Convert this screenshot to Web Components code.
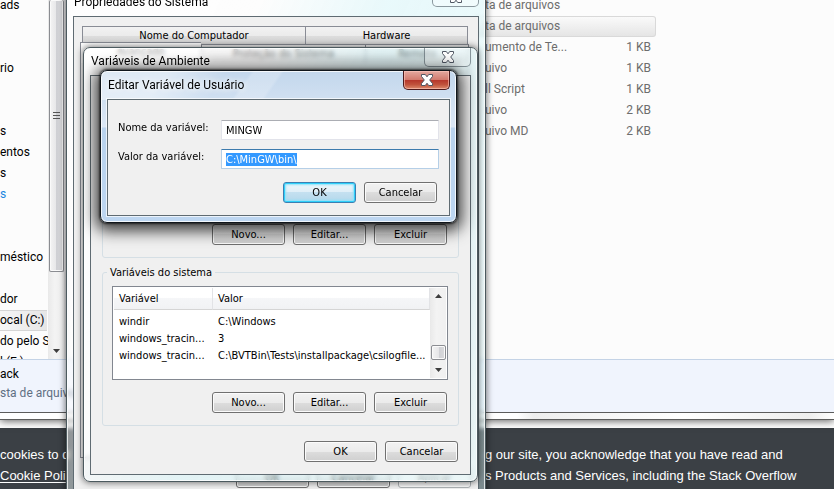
<!DOCTYPE html>
<html lang="pt-BR">
<head>
<meta charset="utf-8">
<title>Variáveis de Ambiente</title>
<style>
  html, body { margin: 0; height: 100%; }
  body { font: 12px/21px Roboto, "Noto Sans", sans-serif; color: #000; overflow: hidden; }
</style>
</head>
<body>
<desk-top></desk-top>
<script>
class Base extends HTMLElement {
  connectedCallback() {
    if (this.shadowRoot) return;
    this.attachShadow({ mode: 'open' }).innerHTML = this.view();
    this.ready();
  }
  ready() {}
}
const TAHOMA = '11px/13px "DejaVu Sans Condensed", "DejaVu Sans", sans-serif';

class PushButton extends Base {
  view() {
    return `<style>
      :host { display: block; width: 73px; }
      button { display: block; box-sizing: border-box; width: 100%; height: 21px; padding: 0; color: #000;
        font: ${TAHOMA}; border: 1px solid #707070; border-radius: 3px; box-shadow: inset 0 0 0 1px #fbfbfb;
        background: linear-gradient(#f2f2f2, #ebebeb 50%, #dddddd 50%, #cfcfcf); }
      :host([default]) button { border-color: #3c7fb1; box-shadow: inset 0 0 0 1px #2fd0fa, inset 0 0 2px 2px #8fe2fa;
        background: linear-gradient(#eef6fa, #dfeef7 50%, #c4e0f0 50%, #b4d8ec); }
      :host([faded]) button { color: #838383; border-color: #adb2b5; background: #f4f4f4; }
    </style><button type="button"><slot></slot></button>`;
  }
}
customElements.define('push-button', PushButton);

class AeroWindow extends Base {
  view() {
    return `<style>
      :host { display: flex; flex-direction: column; box-sizing: border-box; position: absolute;
        border: 1px solid #4c5a5f; border-radius: 7px; padding: 0 6px 6px; overflow: visible;
        backdrop-filter: blur(2px);
        background: linear-gradient(115deg, rgba(255,255,255,.7), rgba(255,255,255,.45) 30%, rgba(213,246,250,.5) 50%, rgba(222,250,252,.4));
        box-shadow: inset 0 0 0 1px rgba(255,255,255,.75), 0 0 6px 1px rgba(0,0,0,.5); }
      :host([active]) { border-color: #10161c;
        background:
          linear-gradient(125deg, rgba(255,255,255,.45) 0 18%, rgba(255,255,255,0) 34% 40%, rgba(255,255,255,.2) 41% 48%, rgba(255,255,255,0) 49%) top / 100% 29px no-repeat,
          linear-gradient(#c3d7ec, #dce8f6 56px, #b9d3ee 57px, #bdd6f1);
        box-shadow: inset 0 0 0 1px rgba(255,255,255,.8), 0 0 2px 1px rgba(0,0,0,.6), 0 3px 15px 5px rgba(0,0,0,.75); }
      header { display: flex; justify-content: space-between; height: 28px; }
      :host([short]) header { height: 27px; }
      :host([tall]) header { height: 29px; }
      h2 { margin: 0; padding: 4px 1px 0; font: 12px/20px Roboto, "Noto Sans", sans-serif;
        text-shadow: 0 0 8px #fff, 0 0 6px #fff; white-space: nowrap; }
      :host([short]) h2 { padding-top: 3px; }
      :host([tall]) h2 { padding: 5px 1px 0; }
      .close { box-sizing: border-box; width: 47px; height: 19px; padding: 0; border: 1px solid rgba(70,85,95,.6); border-top: 0;
        border-radius: 0 0 5px 5px; background: rgba(255,255,255,.3); display: grid; place-items: center; }
      :host([tall]) .close { height: 20px; }
      :host([active]) .close { border-color: #4c1a1c; box-shadow: inset 0 0 0 1px rgba(255,200,190,.6);
        background: linear-gradient(#e3a9a0, #d27b6f 48%, #b5352a 50%, #c0523c 75%, #dc8a6c); }
      .client { display: block; border: 1px solid #5f6b72; background: #f0f0f0; }
      :host([active]) .client { box-shadow: 0 0 0 1px rgba(255,255,255,.7); }
    </style>
    <header><h2>${this.getAttribute('caption')}</h2>
      <button class="close" type="button" aria-label="Fechar">
        <svg width="14" height="12" viewBox="0 0 14 12"><path d="M1.5 .5h3.8L7 2.8 8.700 .5h3.800v2L9.700 6l2.800 3.500v2H8.700L7 9.200 5.300 11.500H1.500v-2L4.300 6 1.500 2.500z" fill="#fff" stroke="#505763" stroke-linejoin="round"/></svg>
      </button></header>
    <div class="client"><slot></slot></div>`;
  }
}
customElements.define('aero-window', AeroWindow);

class ScrollBar extends Base {
  view() {
    return `<style>
      :host { display: flex; flex-direction: column; align-items: center; box-sizing: border-box; width: 16px;
        background: linear-gradient(90deg, #e9e9e9, #f3f3f3 40%, #f0f0f0); }
      svg { flex: none; margin: 6px 0; }
      .space { flex: 1; }
      .thumb { box-sizing: border-box; width: 15px; height: 15px; border: 1px solid #8b8d92; border-radius: 2px;
        box-shadow: inset 0 0 0 1px #fafafa; background: linear-gradient(90deg, #f4f4f4, #e6e6e8 50%, #cfd0d4 50%, #dadadc);
        display: grid; place-items: center; }
      :host(:not([long])) .thumb { margin-bottom: 2px; }
      :host([long]) .up, :host([long]) .space.first, .grip { display: none; }
      :host([long]) .thumb { height: 272px; border-top: 0; padding-bottom: 40px; }
      :host([long]) .grip { display: block; margin: 0; }
    </style>
    <svg class="up" width="7" height="4"><path d="M0 4 L3.5 0 L7 4z" fill="#3d3d3d"/></svg>
    <span class="space first"></span>
    <span class="thumb"><svg class="grip" width="7" height="8"><path d="M0 .5h7M0 3.5h7M0 6.5h7" stroke="#555"/></svg></span>
    ${this.hasAttribute('long') ? '<span class="space"></span>' : ''}
    <svg class="down" width="7" height="4"><path d="M0 0 L3.5 4 L7 0z" fill="#3d3d3d"/></svg>`;
  }
}
customElements.define('scroll-bar', ScrollBar);

class FileExplorer extends Base {
  view() {
    const nav = ['ads', '', '', 'rio', '', '', 's', 'entos', 's', '*s', '', '', 'méstico', '', 'dor', '!ocal (C:)', 'do pelo S', 'l (E:)'];
    const rows = [['ta de arquivos', ''], ['ta de arquivos', ''], ['umento de Te...', '1 KB'], ['uivo', '1 KB'], ['ll Script', '1 KB'], ['uivo', '2 KB'], ['uivo MD', '2 KB']];
    return `<style>
      :host { display: block; background: #fcfcfc; border-bottom: 1px solid #5c5c5c; box-shadow: 0 1px 8px rgba(0,0,0,.65); position: relative; }
      .main { display: flex; height: 359px; overflow: hidden; }
      ul { list-style: none; margin: -5px 0 0; padding: 0; width: 48px; flex: none; }
      li { box-sizing: border-box; height: 21px; white-space: nowrap; }
      li.sel { border: solid #d5d5d5; border-width: 1px 0; line-height: 19px; background: linear-gradient(90deg, #f6f6f6, #e6e6e6); margin-right: 1px; }
      li.link { color: #1a86e0; }
      .split { width: 4px; flex: none; background: #e4e4e6; }
      .files { flex: 1; padding-left: 407px; }
      table { border-collapse: separate; border-spacing: 0; margin-top: -5px; width: 181px; color: #6d6d6d; }
      td { height: 21px; padding: 0; box-sizing: border-box; white-space: nowrap; line-height: 19px; }
      td:first-child { padding-left: 10px; }
      td:last-child { text-align: right; padding-right: 5px; }
      tr.sel td { border: solid #d9d9d9; border-width: 1px 0; background: linear-gradient(#fafafa, #e5e5e5); }
      tr.sel td:last-child { border-right-width: 1px; border-radius: 0 3px 3px 0; }
      .details { box-sizing: border-box; height: 54px; padding-top: 5px; border-top: 1px solid #c4d3e6; border-bottom: 1px solid #5c5c5c;
        background: #f0f4fd; line-height: 19px; color: #5f6f83; }
      .details strong { display: block; font-weight: 400; color: #000; }
      .frame { height: 6px; background: linear-gradient(90deg, #fff 62%, #eee 64%, #fff 82%, #eee 97%, #fff); }
    </style>
    <div class="main">
      <ul>${nav.map(t => t[0] === '!' ? `<li class="sel">${t.slice(1)}</li>` : t[0] === '*' ? `<li class="link">${t.slice(1)}</li>` : `<li>${t}</li>`).join('')}</ul>
      <scroll-bar long></scroll-bar><div class="split"></div>
      <div class="files"><table>${rows.map((r, i) => `<tr${i === 1 ? ' class="sel"' : ''}><td>${r[0]}</td><td>${r[1]}</td></tr>`).join('')}</table></div>
    </div>
    <div class="details"><strong>ack</strong>sta de arquivo</div>
    <div class="frame"></div>`;
  }
}
customElements.define('file-explorer', FileExplorer);

class CookieBanner extends Base {
  view() {
    return `<style>
      :host { display: grid; grid-template-columns: 485px 1fr; flex: 1; margin-top: 8px; padding-top: 16px; background: #3b4045; color: #fff;
        font: 13px/21px "Liberation Sans", sans-serif; white-space: nowrap; }
      p { margin: 0; } a { color: inherit; text-underline-offset: 2px; }
    </style>
    <p>cookies to d<br><a href="#">Cookie Poli</a></p>
    <p>g our site, you acknowledge that you have read and<br>s Products and Services, including the Stack Overflow</p>`;
  }
}
customElements.define('cookie-banner', CookieBanner);

class SystemProps extends Base {
  view() {
    return `<style>
      :host { display: block; padding: 9px 7px 12px 6px; font: ${TAHOMA}; }
      .row { display: grid; text-align: center; line-height: 18px; }
      .row span { box-sizing: border-box; border: 1px solid #898c95; border-bottom: 0; border-right-width: 0;
        background: linear-gradient(#f2f2f2, #ebebeb 50%, #dddddd 50%, #cfcfcf); }
      .row span:last-child { border-right-width: 1px; }
      .back { grid-template-columns: 223fr 163fr; margin: 0 3px 0 2px; height: 18px; }
      .front { grid-template-columns: 120fr 164fr 103fr; margin: -2px 2px 0 0; height: 20px; }
      .front span { margin-top: 2px; }
      .front span:first-child { background: #fff; margin-top: 0; }
      .pane { border: 1px solid #898c95; border-top: 0; height: 395px; margin-right: 2px; background: #f9f9f9; }
      .buttons { display: flex; justify-content: flex-end; gap: 8px; padding-top: 9px; }
    </style>
    <div class="row back"><span>Nome do Computador</span><span>Hardware</span></div>
    <div class="row front"><span>Avançado</span><span>Proteção do Sistema</span><span>Remoto</span></div>
    <div class="pane"></div>
    <div class="buttons"><push-button>OK</push-button><push-button>Cancelar</push-button><push-button faded>Aplicar</push-button></div>`;
  }
}
customElements.define('system-props', SystemProps);

class EnvVars extends Base {
  view() {
    return `<style>
      :host { display: block; padding: 12px 11px 12px; font: ${TAHOMA}; }
      fieldset { box-sizing: border-box; margin: 0; padding: 7px 10px 12px 9px; border: 1px solid #d5dfe5; border-radius: 3px; min-width: 0; }
      fieldset.user { height: 170px; display: flex; flex-direction: column; justify-content: flex-end; margin-bottom: 8px; }
      legend { padding: 0 3px; margin-left: -5px; }
      .buttons { display: flex; justify-content: flex-end; gap: 8px; padding-right: 1px; }
      .sys .buttons { padding-top: 12px; }
      .list { box-sizing: border-box; display: flex; height: 94px; border: 1px solid #828790; padding: 1px; background: #fff; }
      table { flex: 1; border-collapse: separate; border-spacing: 0; table-layout: fixed; align-self: flex-start; width: 0; }
      th, td { padding: 0 0 0 5px; text-align: left; font-weight: 400; white-space: nowrap; overflow: hidden; height: 17px; }
      th { height: 22px; box-sizing: border-box; border-bottom: 1px solid #d5d5d5; border-right: 1px solid #e2e3e6; background: linear-gradient(#fff 45%, #f5f6f8 50%, #f1f2f4); }
      th:first-child { width: 99px; box-sizing: border-box; }
      tbody tr:first-child td { padding-top: 3px; }
      .end { padding-top: 15px; }
    </style>
    <fieldset class="user" aria-label="Usuário"><div class="buttons"><push-button>Novo...</push-button><push-button>Editar...</push-button><push-button>Excluir</push-button></div></fieldset>
    <fieldset class="sys"><legend>Variáveis do sistema</legend>
      <div class="list"><table>
        <thead><tr><th>Variável</th><th>Valor</th></tr></thead>
        <tbody><tr><td>windir</td><td>C:\\Windows</td></tr>
        <tr><td>windows_tracin...</td><td>3</td></tr>
        <tr><td>windows_tracin...</td><td>C:\\BVTBin\\Tests\\installpackage\\csilogfile...</td></tr></tbody>
      </table><scroll-bar></scroll-bar></div>
      <div class="buttons"><push-button>Novo...</push-button><push-button>Editar...</push-button><push-button>Excluir</push-button></div>
    </fieldset>
    <div class="buttons end"><push-button>OK</push-button><push-button>Cancelar</push-button></div>`;
  }
}
customElements.define('env-vars', EnvVars);

class EditVariable extends Base {
  view() {
    return `<style>
      :host { display: block; padding: 20px 10px 12px 10px; font: ${TAHOMA}; }
      form { display: grid; grid-template-columns: 103px 1fr; row-gap: 9px; }
      label { padding-top: 1px; }
      input { box-sizing: border-box; width: 100%; height: 20px; padding: 0 4px; font: inherit; color: #000; background: #fff;
        border: 1px solid #e2e3ea; border-top-color: #abadb3; border-radius: 1px; outline: 0; }
      input:focus, #val { border-color: #b5cfe7; border-top-color: #3d7bad; }
      input::selection { background: #3399ff; color: #fff; }
      .buttons { display: flex; justify-content: flex-end; gap: 8px; padding: 13px 2px 0 0; }
    </style>
    <form><label for="name">Nome da variável:</label><input id="name" value="MINGW">
    <label for="val">Valor da variável:</label><input id="val" value="C:\\MinGW\\bin\\"></form>
    <div class="buttons"><push-button default>OK</push-button><push-button>Cancelar</push-button></div>`;
  }
  ready() {
    const field = this.shadowRoot.getElementById('val');
    field.focus({ preventScroll: true });
    field.select();
  }
}
customElements.define('edit-variable', EditVariable);

class DeskTop extends Base {
  view() {
    return `<style>
      :host { display: flex; flex-direction: column; position: relative; min-height: 100vh; overflow: hidden; background: #fff; }
      .props { left: 66px; top: -14px; width: 420px; }
      .env { left: 83px; top: 47px; width: 395px; }
      .edit { left: 100px; top: 70px; width: 357px; }
    </style>
    <file-explorer></file-explorer>
    <cookie-banner></cookie-banner>
    <aero-window class="props" tall caption="Propriedades do Sistema"><system-props></system-props></aero-window>
    <aero-window class="env" short caption="Variáveis de Ambiente"><env-vars></env-vars></aero-window>
    <aero-window class="edit" active caption="Editar Variável de Usuário"><edit-variable></edit-variable></aero-window>`;
  }
}
customElements.define('desk-top', DeskTop);
</script>
</body>
</html>
